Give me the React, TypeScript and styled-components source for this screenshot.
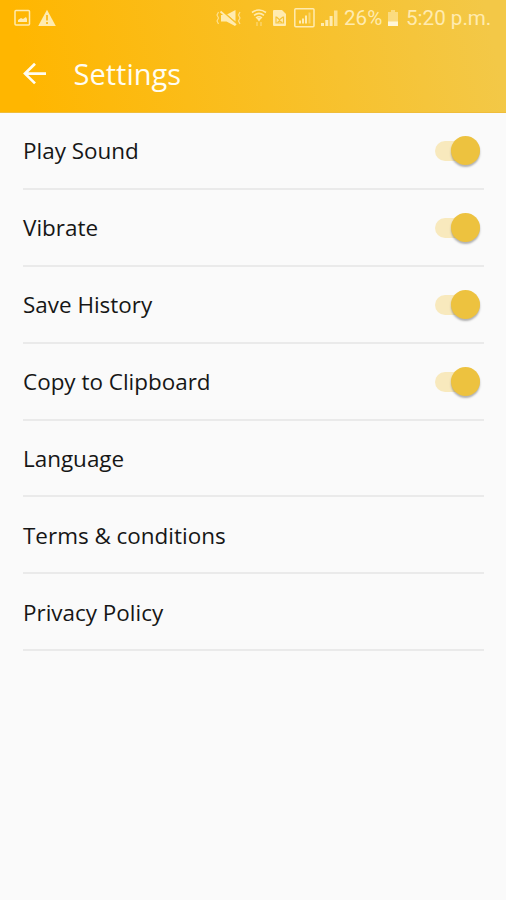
import React from "react";
import styled, { createGlobalStyle } from "styled-components";

const GlobalStyle = createGlobalStyle`
  * { box-sizing: border-box; }
  body { margin: 0; background: #fafafa; }
`;

const Screen = styled.div`
  width: 506px;
  height: 900px;
  overflow: hidden;
  background: #fafafa;
  color: #161616;
  font-family: "Open Sans", "Noto Sans", sans-serif;
`;

const Header = styled.header`
  height: 113px;
  background: linear-gradient(78deg, #ffb600 6%, #f3c847 96%);
  border-bottom: 1px solid #f0bd3a;
`;

const StatusBar = styled.div`
  height: 36px;
  display: flex;
  align-items: center;
  padding: 0 14px;
  color: #ffebb0;
  svg { display: block; flex: none; }
`;

const Notifications = styled.div`
  display: flex;
  gap: 7px;
`;

const Indicators = styled.div`
  display: flex;
  align-items: center;
  margin-left: auto;
`;

const StatusText = styled.span<{ $width: number; $left: number }>`
  width: ${(p) => p.$width}px;
  margin-left: ${(p) => p.$left}px;
  font: 400 20.6px/36px Roboto, sans-serif;
  white-space: nowrap;
`;

const Slot = styled.span<{ $left?: number }>`
  margin-left: ${(p) => p.$left ?? 0}px;
`;

const AppBar = styled.div`
  height: 76px;
  display: flex;
  align-items: center;
  padding-left: 22px;
`;

const BackButton = styled.button`
  width: 26px;
  height: 26px;
  padding: 0;
  border: 0;
  background: none;
  color: #fffdf2;
  cursor: pointer;
  svg { display: block; }
`;

const Title = styled.h1`
  margin: 0 0 0 25.6px;
  font-size: 29px;
  font-weight: 400;
  line-height: 38px;
  color: #fffdf2;
`;

const List = styled.ul`
  list-style: none;
  margin: 0;
  padding: 0 22px 0 23px;
`;

const Row = styled.li`
  height: 76.9px;
  padding-top: 2px;
  display: flex;
  align-items: center;
  justify-content: space-between;
  border-bottom: 2px solid #eaeaea;
`;

const Label = styled.span`
  font-size: 22.45px;
  line-height: 32px;
  white-space: nowrap;
`;

const Track = styled.button`
  width: 45px;
  height: 20px;
  margin-right: 4px;
  padding: 0;
  border: 0;
  border-radius: 10px;
  background: #f8e9bd;
  display: flex;
  align-items: center;
  justify-content: flex-end;
`;

const Thumb = styled.span`
  width: 29px;
  height: 29px;
  flex: none;
  margin-bottom: 1px;
  border-radius: 50%;
  background: #edc23f;
  box-shadow: 0 2px 2px rgba(70, 70, 70, 0.4);
`;

const PictureIcon = () => (
  <svg width="17" height="18" viewBox="0 0 17 18">
    <rect x="1" y="1.5" width="14.5" height="14.5" rx="1" fill="none" stroke="currentColor" strokeWidth="1.5" />
    <path d="M4 13V11l3-2 2 1 3-2 1 2v3z" fill="currentColor" />
  </svg>
);

const WarningIcon = () => (
  <svg width="18" height="18" viewBox="0 0 18 18">
    <path d="M9 .8 17.8 17H.2z" fill="currentColor" />
    <path d="M9 6v5.5M9 13v2" stroke="#fdb91a" strokeWidth="1.8" />
  </svg>
);

const MuteIcon = () => (
  <svg width="26" height="18" viewBox="0 0 26 18">
    <path d="M11 5.5 19.5 1v11.5z" fill="currentColor" />
    <path d="M5 6h3l11 9v2l-8.5-4.5H5z" fill="currentColor" />
    <path d="M4.5 2.5 20 16" stroke="currentColor" strokeWidth="1.8" />
    <path d="M10 5 20 13.5" stroke="#f8c331" strokeWidth="1" />
    <path d="m2.5 3-1.5 3 1.5 3L1 12l1.5 3M24 3l-1.5 3L24 9l-1.5 3 1.5 3" fill="none" stroke="currentColor" strokeWidth="1.2" opacity=".75" />
  </svg>
);

const WifiIcon = () => (
  <svg width="16" height="18" viewBox="0 0 16 18">
    <g fill="none" stroke="currentColor" strokeWidth="1.6">
      <path d="M1 3.5Q8-1.5 15 3.5M3 6.3Q8 2.5 13 6.3M5 9Q8 6.5 11 9" />
      <path d="M6 13v4M10 13v4" strokeWidth="1.2" opacity=".6" />
    </g>
    <path d="M5.5 9h5L8 12.5z" fill="currentColor" />
  </svg>
);

const SimIcon = () => (
  <svg width="15" height="18" viewBox="0 0 15 18">
    <path d="M2 1h8l4 4v11a1 1 0 0 1-1 1H2a1 1 0 0 1-1-1V2a1 1 0 0 1 1-1z" fill="currentColor" />
    <path d="M4 7.5v6.5h7.5V7.5M4.5 8l3 2.8L11 8M5.5 13.5l2-1.7 2.5 1.7" fill="none" stroke="#f6c338" strokeWidth="1.2" />
  </svg>
);

const BoxedSignalIcon = () => (
  <svg width="21" height="20" viewBox="0 0 21 20">
    <rect x=".8" y=".8" width="19.2" height="18" rx="1" fill="none" stroke="currentColor" strokeWidth="1.5" />
    <path d="M5 15.5h2v-3H5zM8 15.5h2v-5H8zM11 15.5h2v-8h-2z" fill="currentColor" />
    <path d="M14.5 15.5h2v-11h-2z" fill="currentColor" opacity=".5" />
  </svg>
);

const SignalIcon = () => (
  <svg width="19" height="18" viewBox="0 0 19 18">
    <path d="M1 17h3v-3H1zM5.3 17h3v-6h-3zM9.6 17h3V7h-3z" fill="currentColor" />
    <path d="M14 17h3.5V1.5H14z" fill="currentColor" opacity=".75" />
  </svg>
);

const BatteryIcon = () => (
  <svg width="12" height="18" viewBox="0 0 12 18">
    <path d="M4 1h4v2h3v10H1V3h3z" fill="currentColor" opacity=".6" />
    <path d="M1 12.5h10V17H1z" fill="#fff6d8" />
  </svg>
);

const ArrowIcon = () => (
  <svg width="26" height="26" viewBox="0 0 26 26" fill="none" stroke="currentColor" strokeWidth="2.7">
    <path d="M24 12.6H3M13 2.8 3 12.6l10 9.8" />
  </svg>
);

const settings = [
  { label: "Play Sound", toggle: true },
  { label: "Vibrate", toggle: true },
  { label: "Save History", toggle: true },
  { label: "Copy to Clipboard", toggle: true },
  { label: "Language", toggle: false },
  { label: "Terms & conditions", toggle: false },
  { label: "Privacy Policy", toggle: false },
];

export default function App() {
  return (
    <Screen>
      <GlobalStyle />
      <Header>
        <StatusBar>
          <Notifications>
            <PictureIcon />
            <WarningIcon />
          </Notifications>
          <Indicators>
            <Slot><MuteIcon /></Slot>
            <Slot $left={9}><WifiIcon /></Slot>
            <Slot $left={5}><SimIcon /></Slot>
            <Slot $left={7}><BoxedSignalIcon /></Slot>
            <Slot $left={5}><SignalIcon /></Slot>
            <StatusText $width={39} $left={5}>26%</StatusText>
            <Slot $left={4}><BatteryIcon /></Slot>
            <StatusText $width={86} $left={7}>5:20 p.m.</StatusText>
          </Indicators>
        </StatusBar>
        <AppBar>
          <BackButton aria-label="Back"><ArrowIcon /></BackButton>
          <Title>Settings</Title>
        </AppBar>
      </Header>
      <List>
        {settings.map(({ label, toggle }) => (
          <Row key={label}>
            <Label>{label}</Label>
            {toggle && (
              <Track role="switch" aria-checked="true" aria-label={label}>
                <Thumb />
              </Track>
            )}
          </Row>
        ))}
      </List>
    </Screen>
  );
}
